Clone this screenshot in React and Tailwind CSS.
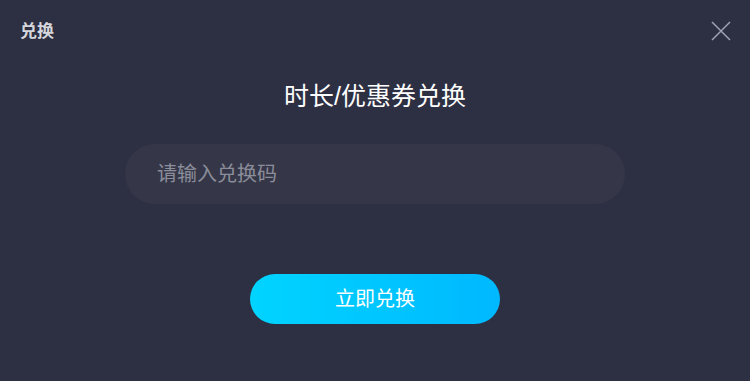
export default function App() {
  return (
    <div
      className="w-[750px] h-[381px] bg-[#2d2f43] flex flex-col"
      style={{ fontFamily: '"Liberation Sans", "Noto Sans CJK SC", sans-serif' }}
    >
      {/* Header */}
      <div className="flex items-center justify-between pl-5 pr-[19px] pt-[20px] h-[42px]">
        <span className="text-[17px] font-bold text-[#d6d7dc] leading-none">兑换</span>
        <svg width="20" height="20" viewBox="0 0 20 20" className="text-[#9fa2b4]">
          <path d="M1 1L19 19M19 1L1 19" stroke="currentColor" strokeWidth="1.5" />
        </svg>
      </div>

      {/* Body */}
      <div className="flex flex-col items-center">
        <h2 className="mt-[38px] text-[25px] leading-[32px] text-white">时长/优惠券兑换</h2>
        <div className="mt-[32px] w-[500px] h-[60px] rounded-full bg-[#353748] flex items-center pl-8">
          <input
            className="bg-transparent outline-none w-full text-[20px] text-white placeholder:text-[#8b8d9a]"
            placeholder="请输入兑换码"
          />
        </div>
        <button className="mt-[70px] w-[250px] h-[50px] rounded-full bg-gradient-to-r from-[#00d4ff] to-[#00b8ff] text-white text-[20px]">
          立即兑换
        </button>
      </div>
    </div>
  );
}
